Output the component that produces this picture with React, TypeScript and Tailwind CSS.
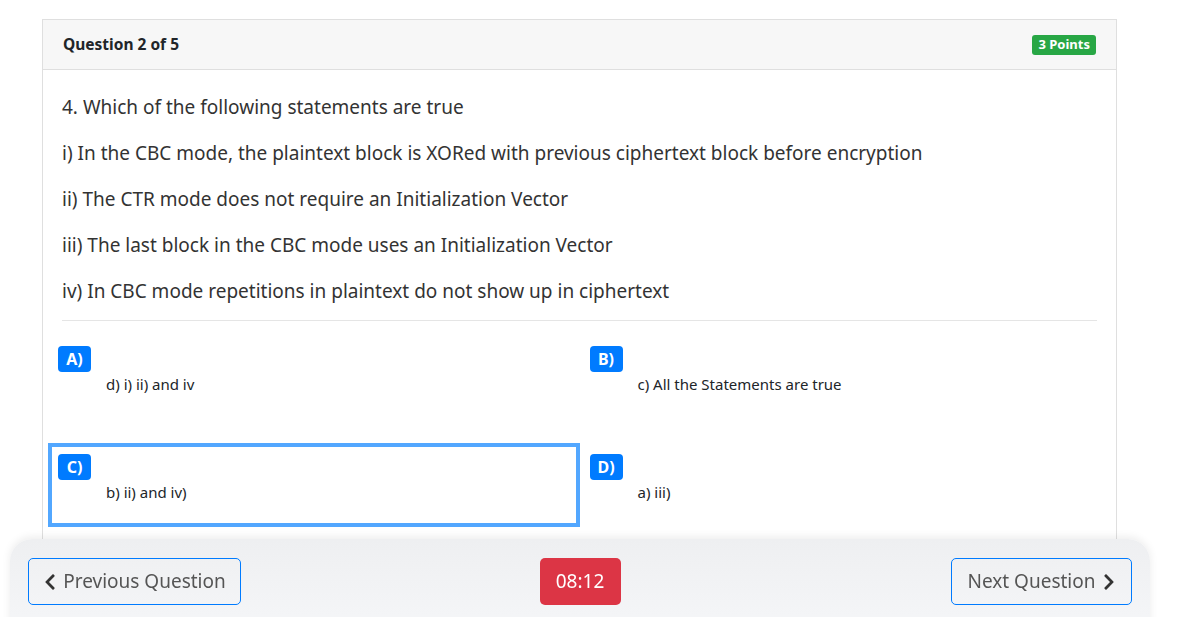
import React from 'react';

const statements = [
  '4. Which of the following statements are true',
  'i) In the CBC mode, the plaintext block is XORed with previous ciphertext block before encryption',
  'ii) The CTR mode does not require an Initialization Vector',
  'iii) The last block in the CBC mode uses an Initialization Vector',
  'iv) In CBC mode repetitions in plaintext do not show up in ciphertext',
];

const options = [
  { key: 'A)', text: 'd) i) ii) and iv' },
  { key: 'B)', text: 'c) All the Statements are true' },
  { key: 'C)', text: 'b) ii) and iv)', selected: true },
  { key: 'D)', text: 'a) iii)' },
];

const ChevronLeft = () => (
  <svg width="14" height="18" viewBox="0 0 320 512" fill="currentColor">
    <path d="M34.52 239.03L228.87 44.69c9.37-9.37 24.57-9.37 33.94 0l22.67 22.67c9.36 9.36 9.37 24.52.04 33.9L131.49 256l154.02 154.75c9.34 9.38 9.32 24.54-.04 33.9l-22.67 22.67c-9.37 9.37-24.57 9.37-33.94 0L34.52 272.97c-9.37-9.37-9.37-24.57 0-33.94z" />
  </svg>
);

const ChevronRight = () => (
  <svg width="14" height="18" viewBox="0 0 320 512" fill="currentColor">
    <path d="M285.48 272.97L91.13 467.31c-9.37 9.37-24.57 9.37-33.94 0l-22.67-22.67c-9.36-9.36-9.37-24.52-.04-33.9L188.51 256 34.48 101.25c-9.34-9.38-9.32-24.54.04-33.9l22.67-22.67c9.37-9.37 24.57-9.37 33.94 0l194.35 194.34c9.37 9.37 9.37 24.57 0 33.95z" />
  </svg>
);

export default function App() {
  return (
    <div className="min-h-screen bg-white font-['Noto_Sans',sans-serif] text-[#212529]">
      <div className="pl-[42px] pt-[19px]">
        <div className="w-[1075px] border border-[#dfdfdf] bg-white">
          <div className="h-[50px] bg-[#f7f7f7] border-b border-[#dfdfdf] px-[20px] flex items-center justify-between">
            <span className="text-[15.5px] font-bold text-[#212529]">Question 2 of 5</span>
            <span className="h-[20px] px-[6px] rounded-[3px] bg-[#28a745] text-white text-[13px] font-bold flex items-center">
              3 Points
            </span>
          </div>

          <div className="px-[19px] pt-[24px] pb-[40px]">
            <div className="flex flex-col gap-[19px]">
              {statements.map((s) => (
                <p key={s} className="text-[19px] leading-[27px] text-[#333]">{s}</p>
              ))}
            </div>
            <hr className="mt-[15px] border-t border-[#e5e5e5]" />

            <div className="grid grid-cols-2 gap-y-[24px] mt-[14px] -mx-[14px]">
              {options.map((o) => (
                <div
                  key={o.key}
                  className={`h-[84px] border-4 px-[6px] pt-[7px] ${o.selected ? 'border-[#52a7ff]' : 'border-transparent'}`}
                >
                  <span className="inline-flex h-[26px] w-[33px] items-center justify-center rounded-[4px] bg-[#007bff] text-white text-[16px] font-bold">
                    {o.key}
                  </span>
                  <p className="pl-[48px] mt-[1px] text-[15px] leading-[22px] text-[#212529]">{o.text}</p>
                </div>
              ))}
            </div>
          </div>
        </div>
      </div>

      <div className="fixed left-[10px] top-[539px] w-[1140px] h-[90px] rounded-t-[22px] bg-gradient-to-b from-[#eeeff1] to-[#f5f6f8] shadow-[0_-2px_8px_rgba(0,0,0,0.08)] grid grid-cols-3 items-start px-[18px] pt-[19px]">
        <button className="justify-self-start h-[47px] w-[213px] rounded-[5px] border border-[#007bff] flex items-center justify-center gap-[6px] text-[19px] text-[#555]">
          <span className="text-[#333]"><ChevronLeft /></span>
          Previous Question
        </button>
        <div className="justify-self-center h-[47px] w-[81px] rounded-[5px] bg-[#dc3545] text-white text-[19px] flex items-center justify-center">
          08:12
        </div>
        <button className="justify-self-end h-[47px] w-[181px] rounded-[5px] border border-[#007bff] flex items-center justify-center gap-[6px] text-[19px] text-[#555]">
          Next Question
          <span className="text-[#333]"><ChevronRight /></span>
        </button>
      </div>
    </div>
  );
}
